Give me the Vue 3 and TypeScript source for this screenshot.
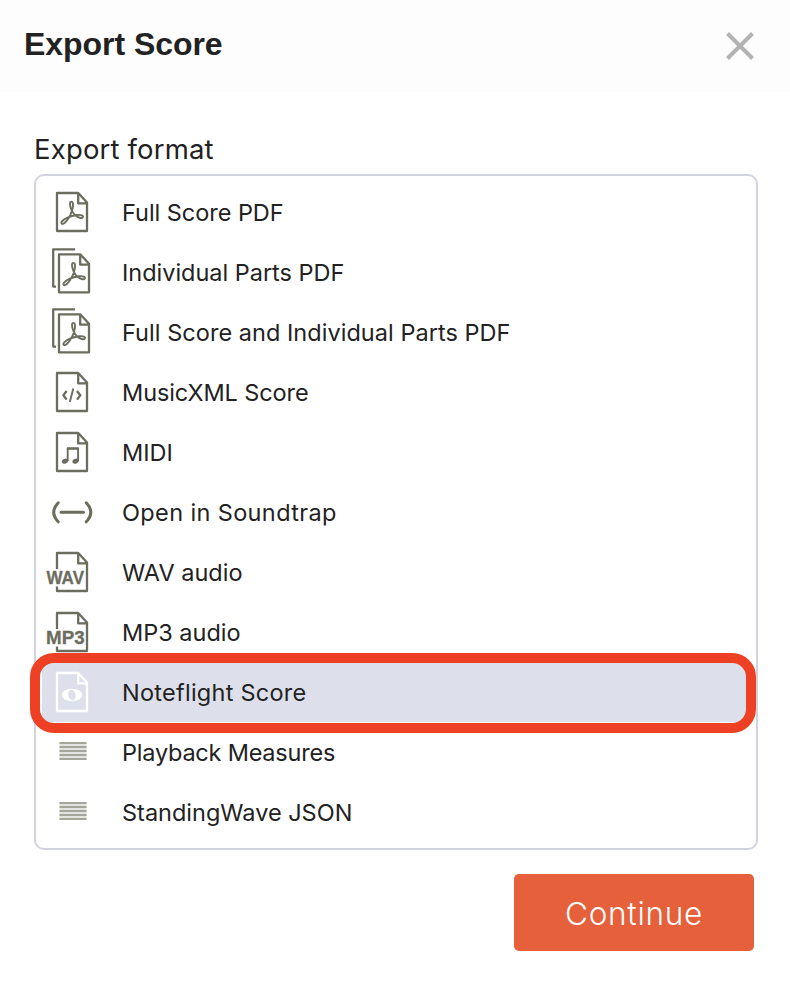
<script setup lang="ts">
type IconName = 'pdf' | 'pdfs' | 'xml' | 'midi' | 'soundtrap' | 'wav' | 'mp3' | 'noteflight' | 'lines'

interface ExportFormat {
  label: string
  icon: IconName
  tracking: number
  selected?: boolean
}

const formats: ExportFormat[] = [
  { label: 'Full Score PDF', icon: 'pdf', tracking: -0.04 },
  { label: 'Individual Parts PDF', icon: 'pdfs', tracking: -0.02 },
  { label: 'Full Score and Individual Parts PDF', icon: 'pdfs', tracking: 0.04 },
  { label: 'MusicXML Score', icon: 'xml', tracking: -0.1 },
  { label: 'MIDI', icon: 'midi', tracking: 0 },
  { label: 'Open in Soundtrap', icon: 'soundtrap', tracking: 0.37 },
  { label: 'WAV audio', icon: 'wav', tracking: 0 },
  { label: 'MP3 audio', icon: 'mp3', tracking: 0 },
  { label: 'Noteflight Score', icon: 'noteflight', tracking: 0.26, selected: true },
  { label: 'Playback Measures', icon: 'lines', tracking: -0.22 },
  { label: 'StandingWave JSON', icon: 'lines', tracking: 0 },
]

const page = 'M15 10H36.2L45 19.5V48H15ZM36.2 10V20.4H45'
const cutPage = 'M15 26V10H36.2L45 19.5V48H15V43.5M36.2 10V20.4H45'
const acrobat =
  'M29.6 27C27.4 22 27.6 18.6 29.5 18.6C31.4 18.6 31.4 23 30.2 27C29 31 25.5 37.5 22.5 40C20 42 18.2 40.2 20.3 38C23 35.2 30 32.8 35 32C39 31.4 41.8 32.6 40.8 34.2C39.8 35.8 36 34.6 33.5 32.5C31.5 30.7 30.4 29 29.6 27Z'
</script>

<template>
  <div class="dialog">
    <header class="header">
      <h1 class="title">Export Score</h1>
      <button class="close" aria-label="Close">
        <svg width="28" height="28" viewBox="0 0 28 28"><path d="M1.5 1.5L26.5 26.5M26.5 1.5L1.5 26.5" /></svg>
      </button>
    </header>
    <main class="body">
      <div class="label">Export format</div>
      <ul class="list">
        <li v-for="f in formats" :key="f.label" class="row" :class="{ selected: f.selected }">
          <svg class="icon" width="60" height="60" viewBox="0 0 60 60">
            <template v-if="f.icon === 'pdf'">
              <path :d="page" />
              <path class="thin" :d="acrobat" />
            </template>
            <template v-else-if="f.icon === 'pdfs'">
              <path d="M33 6.3H11.2V43.6H14" />
              <g transform="translate(2 1.3)">
                <path :d="page" />
                <path class="thin" :d="acrobat" />
              </g>
            </template>
            <template v-else-if="f.icon === 'xml'">
              <path :d="page" />
              <path d="M24.6 28L21.4 32.3L24.6 36.6M35 28L38.3 32.3L35 36.6" />
              <path class="thin" d="M31.3 25.6L27.8 39" />
            </template>
            <template v-else-if="f.icon === 'midi'">
              <path :d="page" />
              <path class="thin" d="M25.7 38V25M36.1 38V25" />
              <path class="beam" d="M25 25.5H36.8" />
              <ellipse class="solid" cx="23" cy="38.2" rx="3.2" ry="2.4" transform="rotate(-20 23 38.2)" />
              <ellipse class="solid" cx="33.5" cy="38.2" rx="3.2" ry="2.4" transform="rotate(-20 33.5 38.2)" />
            </template>
            <template v-else-if="f.icon === 'soundtrap'">
              <path class="thick" d="M16.2 19.8Q7.2 29.3 16.2 38.8M44.3 19.8Q53.3 29.3 44.3 38.8M19 29.3H41.5" />
            </template>
            <template v-else-if="f.icon === 'wav'">
              <path :d="cutPage" />
              <text x="4.5" y="40.8" textLength="37.5" lengthAdjust="spacingAndGlyphs">WAV</text>
            </template>
            <template v-else-if="f.icon === 'mp3'">
              <path :d="cutPage" />
              <text x="4.1" y="40.8" textLength="38.6" lengthAdjust="spacingAndGlyphs">MP3</text>
            </template>
            <template v-else-if="f.icon === 'noteflight'">
              <path :d="page" />
              <ellipse class="solid" cx="30" cy="32" rx="10.3" ry="6.2" />
              <ellipse class="hole" cx="30" cy="32" rx="3.7" ry="5.3" transform="rotate(-15 30 32)" />
            </template>
            <template v-else>
              <rect class="staff-bg" x="17.5" y="19" width="27" height="18" />
              <path class="staff" d="M17.5 20H44.5M17.5 24H44.5M17.5 28H44.5M17.5 32H44.5M17.5 36H44.5" />
            </template>
          </svg>
          <span class="name" :style="{ letterSpacing: f.tracking + 'px' }">{{ f.label }}</span>
          <span v-if="f.selected" class="ring"></span>
        </li>
      </ul>
      <button class="continue">Continue</button>
    </main>
  </div>
</template>

<style>
body {
  margin: 0;
  background: #fff;
}
</style>

<style scoped>
.dialog {
  box-sizing: border-box;
  width: 790px;
  height: 988px;
  background: #fff;
  color: #222;
  font-family: Inter, 'Liberation Sans', sans-serif;
}
.header {
  box-sizing: border-box;
  height: 92px;
  padding: 0 36px 0 24px;
  background: #fdfdfd;
  display: flex;
  justify-content: space-between;
  align-items: flex-start;
}
.title {
  margin: 26px 0 0;
  font: bold 32px/36px 'Liberation Sans', Arial, sans-serif;
  letter-spacing: -0.05px;
}
.close {
  margin: 32px 0 0;
  padding: 0;
  border: 0;
  background: none;
}
.close svg {
  display: block;
  fill: none;
  stroke: #b3b3b3;
  stroke-width: 4;
}
.body {
  display: flex;
  flex-direction: column;
  padding: 40px 32px 0 34px;
}
.label {
  height: 42px;
  font-size: 27.5px;
  line-height: 34px;
  letter-spacing: 0.17px;
}
.list {
  box-sizing: border-box;
  height: 676px;
  margin: 0;
  padding: 7px 9px 5px 6px;
  border: 2px solid #d2d3e2;
  border-radius: 10px;
  list-style: none;
}
.row {
  position: relative;
  display: flex;
  height: 60px;
}
.row.selected {
  background: linear-gradient(#dde0ea 59px, #fff 59px);
}
.icon {
  flex: none;
  fill: none;
  stroke: #6c6d5f;
  stroke-width: 2.3;
  stroke-linejoin: round;
}
.icon .thin {
  stroke-width: 1.9;
}
.icon .beam {
  stroke-width: 2.6;
}
.icon .thick {
  stroke-width: 3;
  stroke-linecap: round;
}
.icon .solid {
  fill: #6c6d5f;
  stroke: none;
}
.icon text {
  fill: #6c6d5f;
  stroke: #6c6d5f;
  stroke-width: 0.3;
  font: bold 17.5px 'Liberation Sans', Arial, sans-serif;
}
.icon .staff {
  stroke: #a5a69a;
  stroke-width: 2;
}
.icon .staff-bg {
  fill: #e3e4df;
  stroke: none;
}
.selected .icon {
  stroke: #fff;
}
.selected .icon .solid {
  fill: #fff;
}
.icon .hole {
  fill: #dde0ea;
  stroke: none;
}
.name {
  margin-left: 20px;
  font-size: 23.5px;
  line-height: 59px;
  white-space: nowrap;
}
/* Highlight ring lies over the list border and neighbouring rows */
.ring {
  position: absolute;
  z-index: 1;
  box-sizing: border-box;
  left: -12px;
  top: -10px;
  width: 726px;
  height: 80px;
  border: 10px solid #ed4025;
  border-radius: 24px;
}
.continue {
  align-self: flex-end;
  width: 240px;
  height: 77px;
  margin: 24px 4px 0 0;
  padding: 1px 0 0;
  border: 0;
  border-radius: 5px;
  background: #e5603b;
  color: #fff;
  font-family: inherit;
  font-size: 31.5px;
  font-weight: 300;
  letter-spacing: 0.7px;
}
</style>
